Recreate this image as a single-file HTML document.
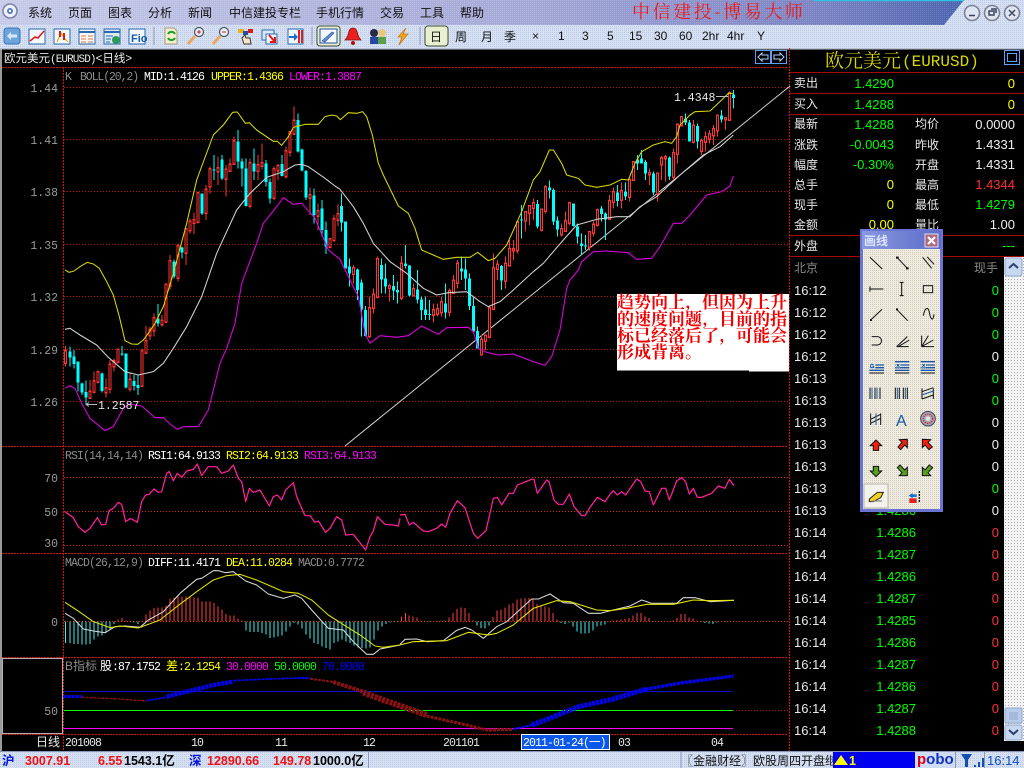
<!DOCTYPE html>
<html><head><meta charset="utf-8"><title>博易大师</title>
<style>
html,body{margin:0;padding:0;background:#000;width:1024px;height:768px;overflow:hidden}
svg{display:block}
text{font-family:"Liberation Sans","Noto Sans CJK SC",sans-serif;font-size:12px;white-space:pre}
.cn{font-size:12px;fill:#111}
.mn{font-family:"Liberation Mono","Noto Sans CJK SC",monospace;font-size:11.5px;letter-spacing:-.9px}
.ax{font-family:"Liberation Mono",monospace;font-size:11.5px;letter-spacing:0;fill:#9a9a9a;text-anchor:end}
.r{font-size:13px;text-anchor:end}
.l{font-size:12px;fill:#e8e8e8}
.t{font-size:13px;fill:#e8e8e8}
.b{font-size:12.5px;font-weight:bold}
.ln{fill:none;stroke-width:3.2;stroke-linejoin:round}
.cr{shape-rendering:crispEdges;fill:none}
.an{font-family:"Noto Serif CJK SC",serif;font-size:17px;font-weight:bold;fill:#f00000;letter-spacing:0}
</style></head><body>
<svg xmlns="http://www.w3.org/2000/svg" width="1024" height="768" viewBox="0 0 1024 768">
<defs>
<linearGradient id="tb" x1="0" x2="1" y1="0" y2="0"><stop offset="0" stop-color="#c6cae8"/><stop offset=".55" stop-color="#a4a8d6"/><stop offset=".85" stop-color="#7a82c2"/><stop offset="1" stop-color="#4a62ae"/></linearGradient>
<linearGradient id="pt" x1="0" x2="1" y1="0" y2="0"><stop offset="0" stop-color="#8a98e0"/><stop offset="1" stop-color="#5a6cc8"/></linearGradient>
<pattern id="dz" width="2" height="2" patternUnits="userSpaceOnUse"><rect width="2" height="2" fill="#d6e2f4"/><rect width="1" height="1" fill="#bcc8e4"/></pattern>
<pattern id="dt" width="2" height="2" patternUnits="userSpaceOnUse"><rect width="1" height="1" fill="#fff" opacity=".16"/></pattern>
<pattern id="ds" width="2" height="2" patternUnits="userSpaceOnUse"><rect width="2" height="2" fill="#f0ece0"/><rect width="1" height="1" fill="#cfcabc"/></pattern>
<pattern id="dg" width="3" height="3" patternUnits="userSpaceOnUse"><rect width="3" height="3" fill="#f4f4f4"/><rect width="1" height="1" fill="#a8a8a8"/></pattern>
<path id="rbA" d="M195 755V788M268 876V893M280 845V875M292 818V845M316 865V876M328 795V866M340 785V798M352 750V785M388 840V865M424 755V856M436 725V758M448 690V705M460 655V690M484 663V672M496 555V665M508 485V556M532 440V532M556 388V458M568 366V390M580 362V368M592 280V365M616 270V338M628 208V258M652 205V213M676 210V236M688 195V212M700 125V190M748 190V316M772 197V212M784 190V197M820 208V293M832 198V210M856 155V228M868 97V155M880 63V100M928 286V292M952 335V347M988 418V440M1000 358V420M1012 343V358"/>
<path id="rbB" d="M40 505V520M88 625V708M100 585V622M112 478V590M148 560V562M184 492V592M220 568V585M280 632V643M292 628V640M304 607V636M328 575V635M340 543V578M352 492V548M424 720V762M436 708V722M448 625V710M460 505V625M472 495V505M496 492V542M508 448V495M520 448V450M532 368V450M556 338V360M568 320V338M580 310V322M604 330V388M616 262V332M664 388V402M676 365V392M688 310V368M748 398V440M760 375V398M772 332V374M808 305V356M820 277V305M844 275V298M868 240V290M880 188V238M928 220V222M952 222V280M964 175V192M976 172V174M1000 160V230M1012 75V160M1024 52V75M1060 78V125M1084 125V152M1096 112V125M1108 103V115M1120 88V105M1132 48V90M1156 55V57M1168 -20V58"/>
<polyline id="ra" points="195,200 220,218 235,245 255,262 270,250 292,218 305,240 317,238 327,197 340,190 355,172 365,178 377,230 392,220 412,232 425,170 437,150 447,148 462,132 475,142 485,140 500,85 508,80 520,107 532,85 545,97 560,78 580,73 592,57 605,92 625,65 650,65 665,85 685,78 700,60 715,100 725,110 737,170 748,130 760,142 780,135 808,183 820,155 832,150 845,165 857,135 880,113 890,155 915,212 930,212 945,232 955,228 977,262 990,250 1010,215 1025,225 1037,270 1060,268 1097,315 1110,275 1120,258 1132,215 1155,238 1180,240 1195,243 1200,220"/>
<polyline id="rb" points="0,210 15,208 28,240 40,232 70,258 85,260 110,250 125,237 137,247 150,205 172,167 195,188 220,265 233,280 258,257 280,160 292,157 305,180 327,145 340,145 352,120 395,103 402,103 412,145 440,105 447,110 462,165 475,178 490,178 508,147 522,185 545,212 555,212 570,187 592,157 615,170 630,148 640,137 652,150 665,140 677,150 710,102 722,110 735,138 748,140 760,180 785,130 797,130 808,165 830,108 845,98 857,110 868,147 880,130 892,157 905,157 935,145 955,123 975,130 988,103 1002,122"/>
</defs>
<rect width="1024" height="768" fill="#000"/>

<!-- window chrome -->
<rect width="1024" height="48" fill="url(#dz)"/>
<path d="M0 0H964L944 25H0Z" fill="url(#tb)"/>
<path d="M0 0H964L944 25H0Z" fill="url(#dt)"/>
<path d="M814 .5H964" stroke="#30c4e4" stroke-width="1.6"/>
<circle cx="10" cy="11" r="7" fill="#eef0fa" stroke="#7a80a8" stroke-width="1.5"/><circle cx="10" cy="11" r="3" fill="#5878c8"/><circle cx="10" cy="11" r="1.2" fill="#fff"/>
<text x="28" y="17" class="cn">系统</text><text x="68" y="17" class="cn">页面</text><text x="108" y="17" class="cn">图表</text><text x="148" y="17" class="cn">分析</text><text x="188" y="17" class="cn">新闻</text><text x="229" y="17" class="cn">中信建投专栏</text><text x="316" y="17" class="cn">手机行情</text><text x="380" y="17" class="cn">交易</text><text x="420" y="17" class="cn">工具</text><text x="460" y="17" class="cn">帮助</text>
<text x="632" y="18" textLength="171" lengthAdjust="spacing" style="font-family:'Noto Serif CJK SC',serif;font-size:18px" fill="#f01818">中信建投-博易大师</text>
<g fill="#dfe4f2" stroke="#7c8296" stroke-width="1.6"><circle cx="972" cy="13" r="7.5"/><circle cx="992" cy="13" r="7.5"/><circle cx="1012" cy="13" r="7.5"/></g>
<g stroke="#39445e" stroke-width="1.5" fill="none"><path d="M969 15.5h6M989 11h5v4h-5zM991 9h5v4M1009 10l6 6M1015 10l-6 6"/></g>

<!-- toolbar separators -->
<g stroke="#8f99b4"><path d="M154 27V45M312 27V45M420 27V45"/></g>
<rect x="317" y="26" width="23" height="20" rx="3" fill="#e9f0cf" stroke="#3e4a38"/>
<rect x="425" y="26" width="23" height="20" rx="3" fill="#e9f0cf" stroke="#3e4a38"/>
<!-- toolbar icons -->
<rect x="4" y="28" width="16" height="16" rx="3" fill="#6ca4dc" stroke="#3e70b0"/><path d="M7 36l4-4v2.5h6v3h-6V40z" fill="#dbe8f6"/>
<rect x="29" y="29" width="16" height="15" fill="#f4f8fc" stroke="#2868b0"/><path d="M30 41l5-4 3 1 6-7" fill="none" stroke="#e01818" stroke-width="1.6"/>
<rect x="54" y="29" width="16" height="15" fill="#f4f8fc" stroke="#2868b0"/><path d="M57 42l4-9 4 6 3 3" fill="none" stroke="#e8b000" stroke-width="1.2"/><path d="M60 31v6M64 33v7" stroke="#e01818" stroke-width="2"/>
<rect x="79" y="29" width="16" height="15" fill="#f4f8fc" stroke="#2868b0"/><path d="M79 32h16" stroke="#2868b0" stroke-width="2"/><path d="M81 36h5M88 36h5M81 39h5M88 39h5M81 42h5M88 42h5" stroke="#e87828"/>
<rect x="104" y="29" width="16" height="15" fill="#dce8f4" stroke="#2868b0"/><path d="M104 32h16" stroke="#2868b0" stroke-width="2"/><path d="M106 36h7M106 39h5M106 42h4" stroke="#2868b0"/><circle cx="116" cy="40" r="4" fill="#2c9a58"/>
<rect x="129" y="29" width="16" height="15" fill="#f4f8fc" stroke="#2868b0"/><text x="131" y="42" style="font-size:11px;font-weight:bold" fill="#1858a8">Fio</text>
<path d="M165 28h9l3 3v13h-12z" fill="#f4eecc" stroke="#a0a080"/><path d="M168 34a4 4 0 0 1 7 0M175 38a4 4 0 0 1-7 0" fill="none" stroke="#18a028" stroke-width="2"/>
<circle cx="199" cy="32" r="4.5" fill="#eef2f8" stroke="#505868" stroke-width="1.3"/><path d="M197 32h4M199 30v4" stroke="#c02020"/><path d="M195 36l-7 8" stroke="#e8a860" stroke-width="3"/>
<circle cx="224" cy="32" r="4.5" fill="#eef2f8" stroke="#505868" stroke-width="1.3"/><path d="M222 32h4" stroke="#c02020"/><path d="M220 36l-7 8" stroke="#e8a860" stroke-width="3"/>
<rect x="238" y="29" width="6" height="4" fill="#e8b020"/><rect x="248" y="29" width="5" height="4" fill="#e01818"/><rect x="243" y="31" width="5" height="4" fill="#2050a0"/><path d="M242 38l3-3 1 3 4 0 1 6h-7z" fill="#f4e4d0" stroke="#403028"/>
<rect x="262" y="30" width="12" height="10" fill="#dce8f8" stroke="#2868b0"/><rect x="266" y="34" width="11" height="10" fill="#f4f8fc" stroke="#2868b0"/><path d="M269 35l6 7M275 37v5h-5" fill="none" stroke="#e01818" stroke-width="2"/>
<rect x="288" y="29" width="15" height="15" fill="#f4f8fc" stroke="#2868b0"/><path d="M299 30v13M302 30v13" stroke="#e02020" stroke-width="2"/><path d="M289 36h5v-3l4 4-4 4v-3h-5z" fill="#1870c8"/>
<rect x="320" y="29" width="17" height="14" fill="#f4f8fc" stroke="#2050a0"/><path d="M322 41l10-9 2 1-9 9z" fill="#6890d8" stroke="#2050a0" stroke-width=".6"/>
<path d="M353 28c4 0 4 4 5 7s2 4 3 5h-16c1-1 2-2 3-5s1-7 5-7z" fill="#e82020" stroke="#901010" stroke-width=".8"/><circle cx="353" cy="43" r="2" fill="#b01010"/>
<circle cx="374" cy="33" r="4" fill="#282848"/><rect x="370" y="37" width="8" height="7" fill="#2848a0"/><circle cx="382" cy="33" r="4" fill="#e8c880"/><rect x="378" y="37" width="8" height="7" fill="#58a048"/>
<path d="M406 28l-8 9h4l-3 8 9-11h-5z" fill="#f0a818" stroke="#c87010" stroke-width=".7"/>
<text x="430" y="41" class="cn">日</text><text x="455" y="41" class="cn">周</text><text x="481" y="41" class="cn">月</text><text x="504" y="41" class="cn">季</text>
<g fill="#111"><text x="532" y="40">×</text><text x="558" y="40">1</text><text x="582" y="40">3</text><text x="607" y="40">5</text><text x="629" y="40">15</text><text x="654" y="40">30</text><text x="679" y="40">60</text><text x="702" y="40">2hr</text><text x="727" y="40">4hr</text><text x="757" y="40">Y</text></g>

<!-- frame -->
<rect x="0" y="48" width="2" height="704" fill="#9a9a9a"/>
<rect x="0" y="48" width="1024" height="1.5" fill="#b8c0d0"/>
<g class="cr">
<path d="M2 67.5H788M2 446.5H788M2 553.5H788M2 657.5H788M2 734.5H788" stroke="#e01010" stroke-dasharray="2 1"/>
<path d="M63.5 67V751M789.5 48V751" stroke="#e01010" stroke-dasharray="2 1"/>
<path d="M64 87.5H788M64 139.5H788M64 191.5H788M64 244.5H788M64 296.5H788M64 349.5H788M64 401.5H788" stroke="#c01010" stroke-dasharray="1 2"/>
<path d="M64 477.5H788M64 511.5H788M64 545.5H788M64 621.5H788" stroke="#e02a10" stroke-dasharray="1 2"/>
<path d="M733 710.5H788" stroke="#c01010" stroke-dasharray="1 2"/>
<path d="M790 72.5H1024M790 93.5H1024M790 114.5H1024M790 235.5H1024M790 256.5H1024" stroke="#a80808"/>
<rect x="2.5" y="658.5" width="60" height="75" stroke="#b0b0b0"/>
</g>

<!-- chart heading -->
<text x="4" y="62" fill="#e8e8e8" style="font-size:11.5px">欧元美元<tspan class="mn" style="font-size:11px">(EURUSD)</tspan>&lt;日线&gt;</text>
<g fill="none" stroke="#5aa0ff" class="cr"><rect x="755.5" y="50.5" width="15" height="13"/><rect x="771.5" y="50.5" width="15" height="13"/></g>
<path d="M758 57l4-4v2h6v4h-6v2zM784 57l-4-4v2h-6v4h6v2z" fill="none" stroke="#b0d0ff"/>

<text x="65" y="80" class="mn" fill="#8c8c8c">K</text><text x="80" y="80" class="mn" style="letter-spacing:-1.1px" fill="#8c8c8c">BOLL(20,2)</text><text x="144" y="80" class="mn" fill="#fff">MID:1.4126</text><text x="211" y="80" class="mn" fill="#ff0">UPPER:1.4366</text><text x="289" y="80" class="mn" fill="#f0f">LOWER:1.3887</text>
<text x="58" y="92" class="ax">1.44</text><text x="58" y="144" class="ax">1.41</text><text x="58" y="196" class="ax">1.38</text><text x="58" y="249" class="ax">1.35</text><text x="58" y="301" class="ax">1.32</text><text x="58" y="354" class="ax">1.29</text><text x="58" y="406" class="ax">1.26</text>
<text x="58" y="482" class="ax">70</text><text x="58" y="516" class="ax">50</text><text x="58" y="547" class="ax">30</text><text x="58" y="626" class="ax">0</text><text x="58" y="715" class="ax">50</text>

<!-- trend line -->
<path d="M345 446L790 86" stroke="#d0d0d0" fill="none"/>

<!-- candles part A -->
<g transform="translate(.5 100) scale(.33333)" class="cr">
<path stroke="#0ff" stroke-width="3" d="M208 740V800M220 750V805M232 785V875M244 848V885M256 842V915M304 818V878M364 738V768M376 760V865M400 825V872M412 825V885M472 612V680M520 478V535M544 440V475M604 280V345M640 165V240M664 165V240M712 90V205M724 175V260M736 175V320M760 145V240M796 180V260M808 235V310M844 165V230M892 40V158M904 145V215M916 210V300M940 265V370M964 300V410M976 365V462"/>
<path stroke="#0ff" stroke-width="9" d="M208 755V773M220 770V792M232 785V848M244 850V878M256 876V893M304 820V873M364 760V763M376 760V862M400 843V858M412 855V864M472 655V670M520 485V530M544 442V458M604 280V340M640 208V212M664 178V236M712 125V185M724 185V205M736 205V318M760 190V215M796 190V246M808 246V295M844 192V228M892 60V155M904 148V212M916 213V293M940 286V345M964 325V390M976 390V440"/>
<path stroke="#f33" stroke-width="3" d="M195 738V800M268 840V895M280 815V880M292 812V850M316 835V892M328 780V880M340 775V815M352 748V790M388 820V875M424 745V858M436 678V760M448 680V720M460 640V710M484 645V680M496 555V668M508 465V568M532 430V545M556 385V495M568 355V400M580 338V402M592 280V370M616 255V360M628 200V280M652 170V255M676 195V290M688 175V215M700 110V195M748 175V325M772 165V240M784 130V208M820 200V300M832 195V240M856 140V235M868 95V170M880 20V100M928 262V345M952 310V390M988 415V445M1000 345V425M1012 312V378"/>
<use href="#rbA" stroke="#f33" stroke-width="9" stroke-linecap="square"/>
<use href="#rbA" stroke="#000" stroke-width="3"/>
</g>
<!-- candles part B -->
<g transform="translate(340.17 100) scale(.33333)" class="cr">
<path stroke="#0ff" stroke-width="3" d="M4 280V395M16 365V500M28 475V560M52 505V600M64 538V710M76 618V710M124 475V580M136 490V580M160 525V600M172 545V610M196 435V505M208 495V590M232 510V610M244 590V660M256 590V660M268 600V660M316 550V655M364 470V540M376 475V570M388 520V630M400 590V700M412 680V745M484 495V570M544 315V415M592 300V385M628 242V295M640 265V375M652 350V410M700 310V380M712 370V430M724 400V465M736 405V450M784 318V365M796 338V420M832 255V320M856 248V300M892 165V210M904 150V190M916 180V240M940 215V285M988 170V240M1036 40V75M1048 60V125M1072 70V145M1144 30V68M1180 -30V25"/>
<path stroke="#0ff" stroke-width="9" d="M4 318V368M16 365V505M28 500V520M52 508V570M64 548V628M76 630V708M124 495V538M136 535V560M160 558V572M172 570V578M196 490V498M208 496V586M232 568V598M244 598V630M256 628V645M268 642V645M316 610V638M364 505V515M376 508V535M388 535V618M400 618V695M412 693V745M484 498V542M544 358V362M592 312V380M628 262V272M640 270V365M652 362V388M700 310V378M712 380V410M724 430V438M736 437V439M784 325V342M796 340V358M832 277V303M856 275V290M892 178V190M904 175V190M916 186V220M940 220V278M988 172V230M1036 55V68M1048 68V125M1072 78V125M1144 47V58M1180 -16V-6"/>
<path stroke="#f33" stroke-width="3" d="M40 495V550M88 590V712M100 565V640M112 470V595M148 550V605M184 468V600M220 550V590M280 610V668M292 610V650M304 590V650M328 565V650M340 525V575M352 480V565M424 705V765M436 705V750M448 620V715M460 460V628M472 480V540M496 470V565M508 420V500M520 420V480M532 365V460M556 335V395M568 315V375M580 295V360M604 330V395M616 255V340M664 370V410M676 335V395M688 305V375M748 395V452M760 365V410M772 325V380M808 285V358M820 262V325M844 248V325M868 235V305M880 185V240M928 205V255M952 220V305M964 168V240M976 165V245M1000 145V240M1012 70V190M1024 48V80M1060 60V130M1084 115V165M1096 95V155M1108 90V130M1120 75V135M1132 45V110M1156 55V90M1168 -25V60"/>
<use href="#rbB" stroke="#f33" stroke-width="9" stroke-linecap="square"/>
<use href="#rbB" stroke="#000" stroke-width="3"/>
</g>

<!-- bollinger -->
<g transform="translate(0 100) scale(.33333)">
<polyline class="ln" stroke="#d8d800" points="195,510 207,517 222,513 240,500 262,487 280,492 298,505 320,545 340,585 358,650 375,722 395,732 413,733 430,720 445,700 465,670 490,620 520,520 560,370 590,240 640,105 670,75 698,37 712,36 736,70 748,68 770,90 820,124 832,124 845,136 865,110 880,82 915,73 955,73 975,50 995,45 1010,48 1020,58"/>
<polyline class="ln" stroke="#d0d0d0" points="195,688 210,685 240,705 290,735 325,772 375,815 415,825 460,815 490,790 520,745 560,680 605,590 650,460 710,330 750,280 800,232 850,215 885,195 905,193 925,200 975,235 1005,258 1020,268"/>
<polyline class="ln" stroke="#e000e0" points="195,865 210,857 225,865 245,910 270,955 315,992 340,980 370,925 385,912 425,918 465,953 490,953 510,972 532,988 550,980 595,980 625,930 660,790 680,745 705,670 725,550 770,430 790,370 830,320 850,293 880,313 905,310 945,355 985,450 1020,478"/>
</g>
<g transform="translate(340 100) scale(.33333)">
<polyline class="ln" stroke="#d8d800" points="0,60 25,38 50,40 68,35 80,50 97,105 115,190 130,225 175,318 205,340 225,385 245,450 310,478 350,472 390,472 413,457 445,482 465,475 500,435 525,380 545,335 580,240 600,215 628,150 640,150 665,190 680,225 715,235 735,255 770,262 810,255 845,238 865,240 885,190 905,155 940,135 975,125 995,130 1010,110 1020,75 1050,45 1065,35 1110,33 1145,0 1165,-20 1180,-20"/>
<polyline class="ln" stroke="#d0d0d0" points="0,268 40,320 70,370 100,430 150,485 200,520 250,565 290,585 325,578 380,575 420,605 445,620 480,605 520,570 580,515 610,490 670,420 710,375 770,358 830,350 870,350 900,320 950,290 1020,225 1090,165 1140,140 1180,105"/>
<polyline class="ln" stroke="#e000e0" points="0,478 30,540 55,590 75,700 90,730 120,707 170,712 205,707 245,678 295,703 320,683 385,682 400,695 415,745 440,757 475,765 520,762 580,785 615,796 635,770 660,690 680,565 690,540 715,510 725,485 760,455 800,453 865,458 890,478 935,475 960,440 1000,370 1025,370 1050,345 1100,285 1145,275 1170,258 1180,228"/>
</g>
<text x="674" y="101" class="mn" style="letter-spacing:0" fill="#e8e8e8">1.4348</text><path d="M716 96.5H728" stroke="#bbb"/>
<text x="98" y="409" class="mn" style="letter-spacing:0" fill="#e8e8e8">1.2587</text><path d="M86 404.5H97M86 404.5l3-2M86 404.5l3 2" stroke="#bbb" fill="none"/>

<!-- annotation -->
<rect x="617" y="294" width="172" height="76.5" fill="#fff"/>
<rect x="749" y="370" width="40" height="1.5" fill="#fff"/>
<text x="617 634 651 668 685 702 719 736 753 770" y="308" class="an">趋势向上,但因为上升</text>
<text x="617 634 651 668 685 702 719 736 753 770" y="325" class="an">的速度问题,目前的指</text>
<text x="617 634 651 668 685 702 719 736 753 770" y="341.5" class="an">标已经落后了,可能会</text>
<text x="617 634 651 668 685" y="358" class="an">形成背离。</text>

<!-- RSI -->
<text x="65" y="459" class="mn" fill="#8c8c8c">RSI(14,14,14)</text><text x="148" y="459" class="mn" fill="#fff">RSI1:64.9133</text><text x="226" y="459" class="mn" fill="#ff0">RSI2:64.9133</text><text x="304" y="459" class="mn" fill="#f0f">RSI3:64.9133</text>
<g transform="translate(0 445) scale(.33333)" fill="none" stroke-width="3.6" stroke-linejoin="round">
<use href="#ra" stroke="#ff20e0"/>
<use href="#ra" stroke="#ff2020" stroke-dasharray="6 9"/>
</g>
<g transform="translate(400 445) scale(.33333)" fill="none" stroke-width="3.6" stroke-linejoin="round">
<use href="#rb" stroke="#ff20e0"/>
<use href="#rb" stroke="#ff2020" stroke-dasharray="6 9"/>
</g>

<!-- MACD -->
<text x="65" y="566" class="mn" fill="#8c8c8c">MACD(26,12,9)</text><text x="148" y="566" class="mn" fill="#fff">DIFF:11.4171</text><text x="226" y="566" class="mn" fill="#ff0">DEA:11.0284</text><text x="298" y="566" class="mn" fill="#8c8c8c">MACD:0.7772</text>
<g transform="translate(.5 445) scale(.33333)" class="cr" stroke-width="3">
<path stroke="#40f0f0" d="M195 529v65M208 529v65M220 529v68M232 529v68M244 529v70M256 529v70M268 529v68M280 529v55M292 529v45M304 529v42M316 529v35M328 529v25M340 529v8M400 529v3M412 529v8M736 529v28M748 529v32M760 529v32M772 529v32M784 529v35M796 529v40M808 529v50M820 529v48M832 529v45M844 529v42M856 529v30M868 529v15M880 529v5M892 529v10M904 529v22M916 529v40M928 529v52M940 529v65M952 529v68M964 529v75M976 529v80M988 529v85M1000 529v65M1012 529v60M1024 529v55M1036 529v60M1048 529v65M1060 529v72M1072 529v78M1084 529v80M1096 529v82M1108 529v78M1120 529v55M1132 529v28M1144 529v15M1156 529v8M1168 529v3M1180 529v2M1192 529v2"/>
<path stroke="#ff4040" d="M352 529v-5M364 529v-10M376 529v-3M388 529v-2M424 529v-3M436 529v-20M448 529v-32M460 529v-40M472 529v-42M484 529v-42M496 529v-48M508 529v-68M520 529v-72M532 529v-75M544 529v-75M556 529v-75M568 529v-75M580 529v-72M592 529v-72M604 529v-60M616 529v-60M628 529v-60M640 529v-55M652 529v-45M664 529v-35M676 529v-22M688 529v-18M700 529v-17M712 529v-8M724 529v-2"/>
</g>
<g transform="translate(399.83 445) scale(.33333)" class="cr" stroke-width="3">
<path stroke="#ff4040" d="M5 529v-15M17 529v-25M28 529v-18M40 529v-14M52 529v-12M64 529v-3M112 529v-2M124 529v-2M136 529v-3M148 529v-12M160 529v-25M172 529v-37M184 529v-42M196 529v-40M208 529v-25M220 529v-3M280 529v-13M292 529v-32M304 529v-35M316 529v-42M328 529v-50M340 529v-55M352 529v-65M364 529v-68M376 529v-70M388 529v-70M400 529v-65M412 529v-52M424 529v-48M436 529v-45M448 529v-42M460 529v-25M472 529v-5M628 529v-1M640 529v-3M652 529v-4M664 529v-5M676 529v-7M688 529v-10M700 529v-18M712 529v-25M724 529v-25M736 529v-15M748 529v-10M784 529v-1M796 529v-1M808 529v-1M820 529v-2M832 529v-10M844 529v-22M856 529v-22M868 529v-12M880 529v-8M892 529v-2"/>
<path stroke="#40f0f0" d="M76 529v2M88 529v2M232 529v12M244 529v20M256 529v22M268 529v12M484 529v5M496 529v8M508 529v3M520 529v15M532 529v30M544 529v37M556 529v37M568 529v35M580 529v28M592 529v15M604 529v12M616 529v10M760 529v2M772 529v1M904 529v2M916 529v5M928 529v7M940 529v8M952 529v3M964 529v1M976 529v2"/>
</g>
<g transform="translate(0 445) scale(.33333)">
<polyline class="ln" stroke="#d8d8d8" points="195,505 220,520 250,552 280,558 315,563 345,545 375,543 420,547 445,525 490,500 540,445 590,403 605,400 640,377 655,377 675,383 700,380 737,408 770,420 805,447 850,460 885,450 905,460 935,495 985,550 1030,555 1060,590 1100,628 1120,628 1140,612 1200,600"/>
<polyline class="ln" stroke="#e0e000" points="195,472 230,495 280,530 330,548 360,543 415,549 480,525 530,485 590,440 640,405 680,392 720,388 770,405 850,440 895,445 935,465 985,510 1040,545 1080,570 1125,603 1150,607 1200,600"/>
</g>
<g transform="translate(400 445) scale(.33333)">
<polyline class="ln" stroke="#d8d8d8" points="0,598 15,583 50,582 80,590 130,587 170,556 195,547 215,555 250,580 290,545 320,530 395,462 415,462 450,447 490,473 520,475 565,505 600,505 640,495 690,483 725,465 755,475 800,475 830,475 850,458 885,458 930,470 1002,466"/>
<polyline class="ln" stroke="#e8e800" points="0,600 40,590 140,587 205,562 265,570 290,565 340,540 400,490 470,467 510,470 590,495 630,497 680,490 740,478 820,478 880,465 930,467 1002,466"/>
</g>

<!-- B indicator -->
<text x="65" y="670" style="font-size:12px" fill="#8c8c8c">B指标</text><text x="100" y="670" style="font-size:12px" fill="#fff">股<tspan class="mn">:87.1752</tspan></text><text x="166" y="670" style="font-size:12px" fill="#ff0">差<tspan class="mn">:2.1254</tspan></text><text x="226" y="670" class="mn" fill="#f0f">30.0000</text><text x="274" y="670" class="mn" fill="#0f0">50.0000</text><text x="322" y="670" class="mn" fill="#00f">70.0000</text>
<g class="cr"><path d="M64 691.5H733" stroke="#1010d0"/><path d="M64 710.5H733" stroke="#00ff00"/><path d="M64 728.5H733" stroke="#ff00ff"/></g>
<g transform="translate(0 650) scale(.33333)" fill="none" stroke-dasharray="9 3" class="cr">
<path stroke="#0000ff" stroke-width="9" d="M190 140H245"/>
<path stroke="#8c1010" stroke-width="4" d="M245 142L340 146L440 153"/>
<path stroke="#0000ff" stroke-width="5" d="M440 152L500 142"/>
<path stroke="#0000ff" stroke-width="13" d="M500 140L560 125L640 105L700 95"/>
<path stroke="#0000ff" stroke-width="5" d="M700 92L780 88L890 84L930 84"/>
<path stroke="#8c1010" stroke-width="6" d="M930 86L1000 96"/>
<path stroke="#8c1010" stroke-width="12" d="M1000 96L1090 125"/>
<path stroke="#8c1010" stroke-width="18" d="M1090 128L1150 150L1280 195"/>
<path stroke="#8c1010" stroke-width="9" d="M1280 198L1400 225L1460 240L1536 238"/>
</g>
<g transform="translate(512 650) scale(.33333)" fill="none" stroke-dasharray="9 3" class="cr">
<path stroke="#0000ff" stroke-width="6" d="M5 237L60 225"/>
<path stroke="#0000ff" stroke-width="15" d="M60 225L100 210L200 170L300 148L400 118"/>
<path stroke="#0000ff" stroke-width="10" d="M400 118L500 100L665 78"/>
</g>

<!-- x axis -->
<text x="36" y="746" style="font-size:12px" fill="#e8e8e8">日线</text>
<text x="65" y="746" class="mn" fill="#e8e8e8">201008</text><text x="191" y="746" class="mn" fill="#e8e8e8">10</text><text x="275" y="746" class="mn" fill="#e8e8e8">11</text><text x="363" y="746" class="mn" fill="#e8e8e8">12</text><text x="443" y="746" class="mn" fill="#e8e8e8">201101</text><text x="618" y="746" class="mn" fill="#e8e8e8">03</text><text x="711" y="746" class="mn" fill="#e8e8e8">04</text>
<rect x="521.5" y="734.5" width="88" height="15" fill="#0a58e8" stroke="#fff"/>
<text x="523" y="746" class="mn" fill="#fff">2011-01-24(一)</text>

<!-- right panel -->
<text x="825" y="67" style="font-family:'Noto Serif CJK SC',serif;font-size:19px" fill="#d8d800">欧元美元</text><text x="902" y="66" style="font-family:'Liberation Mono',monospace;font-size:16px" fill="#d8d800">(EURUSD)</text>
<g class="cr" stroke="#5aa0ff"><rect x="1004.5" y="50.5" width="15" height="14"/><rect x="1007.5" y="53.5" width="9" height="8"/></g>

<text x="794" y="87" class="l">卖出</text><text x="794" y="108" class="l">买入</text><text x="794" y="128" class="l">最新</text><text x="794" y="149" class="l">涨跌</text><text x="794" y="169" class="l">幅度</text><text x="794" y="189" class="l">总手</text><text x="794" y="209" class="l">现手</text><text x="794" y="229" class="l">金额</text><text x="794" y="250" class="l">外盘</text>
<text x="915" y="128" class="l">均价</text><text x="915" y="149" class="l">昨收</text><text x="915" y="169" class="l">开盘</text><text x="915" y="189" class="l">最高</text><text x="915" y="209" class="l">最低</text><text x="915" y="229" class="l">量比</text>
<text x="794" y="272" style="font-size:12px" fill="#8a8a8a">北京</text><text x="974" y="272" style="font-size:12px" fill="#8a8a8a">现手</text>
<text x="894" y="88" class="r" fill="#0f0">1.4290</text><text x="894" y="109" class="r" fill="#0f0">1.4288</text><text x="894" y="129" class="r" fill="#0f0">1.4288</text><text x="894" y="149" class="r" fill="#0f0">-0.0043</text><text x="894" y="169" class="r" fill="#0f0">-0.30%</text><text x="894" y="189" class="r" fill="#ff0">0</text><text x="894" y="209" class="r" fill="#ff0">0</text><text x="894" y="229" class="r" fill="#ff0">0.00</text>
<text x="1015" y="88" class="r" fill="#ff0">0</text><text x="1015" y="109" class="r" fill="#ff0">0</text><text x="1015" y="129" class="r" fill="#eee">0.0000</text><text x="1015" y="149" class="r" fill="#eee">1.4331</text><text x="1015" y="169" class="r" fill="#eee">1.4331</text><text x="1015" y="189" class="r" fill="#ff3030">1.4344</text><text x="1015" y="209" class="r" fill="#0f0">1.4279</text><text x="1015" y="229" class="r" fill="#eee">1.00</text><text x="1015" y="250" class="r" fill="#0f0">---</text>

<!-- tick list -->
<text x="794" y="295" class="t">16:12</text><text x="794" y="317" class="t">16:12</text><text x="794" y="339" class="t">16:12</text><text x="794" y="361" class="t">16:12</text><text x="794" y="383" class="t">16:13</text><text x="794" y="405" class="t">16:13</text><text x="794" y="427" class="t">16:13</text><text x="794" y="449" class="t">16:13</text><text x="794" y="471" class="t">16:13</text><text x="794" y="493" class="t">16:13</text><text x="794" y="515" class="t">16:13</text><text x="794" y="537" class="t">16:14</text><text x="794" y="559" class="t">16:14</text><text x="794" y="581" class="t">16:14</text><text x="794" y="603" class="t">16:14</text><text x="794" y="625" class="t">16:14</text><text x="794" y="647" class="t">16:14</text><text x="794" y="669" class="t">16:14</text><text x="794" y="691" class="t">16:14</text><text x="794" y="713" class="t">16:14</text><text x="794" y="735" class="t">16:14</text>
<text x="916" y="515" class="r" fill="#0f0">1.4286</text><text x="916" y="537" class="r" fill="#0f0">1.4286</text><text x="916" y="559" class="r" fill="#0f0">1.4287</text><text x="916" y="581" class="r" fill="#0f0">1.4286</text><text x="916" y="603" class="r" fill="#0f0">1.4287</text><text x="916" y="625" class="r" fill="#0f0">1.4285</text><text x="916" y="647" class="r" fill="#0f0">1.4286</text><text x="916" y="669" class="r" fill="#0f0">1.4287</text><text x="916" y="691" class="r" fill="#0f0">1.4286</text><text x="916" y="713" class="r" fill="#0f0">1.4287</text><text x="916" y="735" class="r" fill="#0f0">1.4288</text>
<text x="999" y="295" class="r" fill="#0f0">0</text><text x="999" y="317" class="r" fill="#0f0">0</text><text x="999" y="339" class="r" fill="#0f0">0</text><text x="999" y="361" class="r" fill="#eee">0</text><text x="999" y="383" class="r" fill="#0f0">0</text><text x="999" y="405" class="r" fill="#0f0">0</text><text x="999" y="427" class="r" fill="#eee">0</text><text x="999" y="449" class="r" fill="#eee">0</text><text x="999" y="471" class="r" fill="#eee">0</text><text x="999" y="493" class="r" fill="#0f0">0</text><text x="999" y="515" class="r" fill="#eee">0</text><text x="999" y="537" class="r" fill="#f33">0</text><text x="999" y="559" class="r" fill="#f33">0</text><text x="999" y="581" class="r" fill="#f33">0</text><text x="999" y="603" class="r" fill="#f33">0</text><text x="999" y="625" class="r" fill="#f33">0</text><text x="999" y="647" class="r" fill="#f33">0</text><text x="999" y="669" class="r" fill="#f33">0</text><text x="999" y="691" class="r" fill="#f33">0</text><text x="999" y="713" class="r" fill="#f33">0</text><text x="999" y="735" class="r" fill="#f33">0</text>

<!-- scrollbar -->
<rect x="1004" y="257" width="20" height="484" fill="url(#dg)"/>
<rect x="1005" y="258" width="17" height="18" rx="2" fill="#c8d8f0" stroke="#8ea8d0"/><path d="M1009 268l4.5-4 4.5 4" fill="none" stroke="#304070" stroke-width="2"/>
<rect x="1005" y="708" width="17" height="15" rx="1" fill="#b8cce8" stroke="#8ea8d0"/><path d="M1009 713h9M1009 715h9M1009 717h9M1009 719h9" stroke="#8ea8d0"/>
<rect x="1005" y="725" width="17" height="15" rx="2" fill="#c8d8f0" stroke="#8ea8d0"/><path d="M1009 730l4.5 4 4.5-4" fill="none" stroke="#304070" stroke-width="2"/>

<!-- drawing panel -->
<rect x="860" y="229" width="83" height="283" fill="#6a74d4"/>
<rect x="862" y="231" width="79" height="18" fill="url(#pt)"/>
<text x="864" y="245" style="font-size:12px;font-weight:bold" fill="#dfe6ff">画线</text>
<rect x="925" y="234" width="13" height="13" fill="#b06880" stroke="#dcdcf0"/><path d="M928 237l7 7M935 237l-7 7" stroke="#fff" stroke-width="2.2"/>
<rect x="863" y="249" width="77" height="260" fill="url(#ds)"/>
<rect x="864" y="484" width="24" height="24" fill="#f4f2ea" stroke="#b8b4a8"/>
<g transform="translate(850 225) scale(.33333)" fill="none" stroke="#111" stroke-width="3">
<path d="M60 97L97 132M142 98L172 130M218 97L245 130M232 96L252 118"/>
<path d="M58 192H100M60 184V200M155 172V212M149 172H161M149 212H161"/><rect x="220" y="182" width="28" height="21"/>
<path d="M62 285L96 253M140 253L173 287M220 272C225 245 235 245 238 262S248 295 252 268"/>
<path d="M65 335H82A12 12 0 0 1 82 360H65M140 365H176M140 365L172 335M145 365L178 345M215 365H252M215 365V332M215 365L235 332M215 365L250 345"/>
<path d="M60 488V522M75 488V522M90 488V522" stroke="#111"/>
<path d="M66 488V522M81 488V522" stroke="#1858a8"/>
<path d="M136 488V522M148 488V522M160 488V522M172 488V522" stroke="#111"/><path d="M142 488V522M166 488V522" stroke="#1858a8"/>
<path d="M216 490V522M250 490V522M216 500L250 488M216 522L250 510" stroke="#111"/><path d="M216 510L250 498" stroke="#1858a8"/>
<path d="M62 565V600M92 565V600M62 583L92 568M62 595L92 580" stroke="#111"/><path d="M78 565V600" stroke="#1858a8"/>
<path stroke="none" fill="#111" d="M138 95h8v6h-8zM168 127h8v6h-8zM60 282h6v6h-6zM138 250h6v6h-6z"/>
<path stroke="#1858a8" stroke-width="4" d="M58 420H102M58 428H102M58 436H102M135 410H178M135 420H178M135 428H178M135 436H178M212 410H255M212 420H255M212 428H255M212 436H255"/>
<path stroke="#111" d="M58 444H102M135 444H178M212 444H255"/>
<rect x="58" y="413" width="18" height="18" fill="#f0ece0" stroke="none"/><rect x="137" y="415" width="14" height="12" fill="#f0ece0" stroke="none"/><rect x="214" y="415" width="14" height="12" fill="#f0ece0" stroke="none"/>
<path stroke="#1858a8" d="M62 418h9M62 418v10h9v-5h-4M140 417l8 8M148 417l-8 8M217 417l8 8M225 417l-8 8"/>
<circle cx="234" cy="581" r="22" fill="#a0a8b8" stroke="#445"/><circle cx="234" cy="581" r="14" fill="none" stroke="#e02020" stroke-dasharray="4 3" stroke-width="4"/><circle cx="234" cy="581" r="7" fill="#e4e4e4" stroke="none"/>
<path stroke="#111" fill="#f02010" d="M78 645L95 662H86V676H70V662H61Z"/>
<path stroke="#111" fill="#f02010" d="M172 643V668L164 660L152 674L144 666L156 652L148 644Z"/>
<path stroke="#111" fill="#f02010" d="M217 643V668L225 660L237 674L247 666L234 652L242 644Z"/>
<path stroke="#111" fill="#58a020" d="M78 755L95 738H86V724H70V738H61Z"/>
<path stroke="#111" fill="#58a020" d="M172 752V727L164 735L150 720L142 728L156 743L148 752Z"/>
<path stroke="#111" fill="#58a020" d="M217 752V727L225 735L238 720L248 728L234 743L242 752Z"/>
<path stroke="#222" fill="#f0d020" d="M58 822L82 802H100L92 818L70 830H58Z"/><path stroke="none" fill="#888" d="M60 830H96V826H70Z"/>
<path stroke="none" fill="#e02020" d="M178 820H200V834H178Z"/><path stroke="none" fill="#1870c8" d="M176 812L188 804V808H200V816H188V820Z"/><path stroke="#111" stroke-width="4" stroke-dasharray="6 3" d="M208 798V834"/>
</g>
<text x="896" y="426" style="font-size:16px" fill="#1858a8">A</text>

<!-- status bar -->
<rect x="0" y="752" width="1024" height="16" fill="url(#dz)"/>
<path d="M0 751.5H1024" stroke="#8898b8"/>
<path d="M368.5 752V768M681 752V768M955.5 752V768M984.5 752V768" stroke="#8898b8"/>
<text x="2" y="765" class="b" fill="#0010e0">沪</text><text x="25" y="765" class="b" fill="#f01010">3007.91</text><text x="98" y="765" class="b" fill="#f01010">6.55</text><text x="124" y="765" class="b" fill="#000">1543.1亿</text>
<text x="189" y="765" class="b" fill="#0010e0">深</text><text x="207" y="765" class="b" fill="#f01010">12890.66</text><text x="273" y="765" class="b" fill="#f01010">149.78</text><text x="313" y="765" class="b" fill="#000">1000.0亿</text>
<text x="681" y="765" style="font-size:12px" fill="#111">〖金融财经〗欧股周四开盘继</text>
<rect x="833" y="752" width="82" height="16" fill="#0000f0"/>
<path d="M841 755L848 765H834Z" fill="#ff0"/><text x="849" y="765" class="b" fill="#ff0">1</text>
<rect x="916" y="752" width="39" height="16" fill="#d0dcf4"/>
<text x="917" y="764" style="font-size:15px;font-weight:bold" fill="#e00010">p<tspan fill="#1030c0">obo</tspan></text>
<path d="M961 754h11l-4 6v7h-3v-7z" fill="#1050b0"/><path d="M974 765h2v2h-2zM978 762h2v5h-2zM982 758h2v9h-2z" fill="#1050b0"/>
<text x="987" y="765" style="font-size:13px" fill="#1050c0">16:14</text>
</svg>
</body></html>
